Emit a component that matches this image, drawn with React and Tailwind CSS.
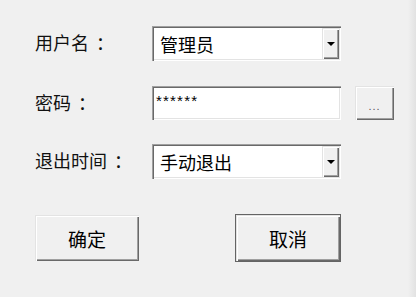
import React from "react";

const sunken =
  "bg-white shadow-[inset_1px_1px_0_#a0a0a0,inset_2px_2px_0_#696969,inset_-1px_-1px_0_#ffffff,inset_-2px_-2px_0_#e3e3e3]";
const raised =
  "bg-[#f0f0f0] shadow-[inset_1px_1px_0_#e3e3e3,inset_2px_2px_0_#ffffff,inset_-1px_-1px_0_#696969,inset_-2px_-2px_0_#a0a0a0]";

function Arrow() {
  return (
    <div className="w-0 h-0 border-l-[4px] border-r-[4px] border-t-[4px] border-l-transparent border-r-transparent border-t-black" />
  );
}

function Combo({ value }) {
  return (
    <div className={`w-[189px] h-[35px] flex p-[2px] ${sunken}`}>
      <div className="flex-1 flex items-center pl-[6px] text-[18px] leading-none text-black">
        {value}
      </div>
      <div className={`w-[17px] flex items-center justify-center ${raised}`}>
        <Arrow />
      </div>
    </div>
  );
}

function Label({ text }) {
  return (
    <div className="w-[117px] flex text-[18px] leading-none text-[#111] pb-[3px]">
      <span>{text}</span>
      <span className="ml-[7px]">：</span>
    </div>
  );
}

export default function App() {
  return (
    <div className="w-[416px] h-[297px] flex bg-[#f0f0f0] font-['Microsoft_YaHei','Noto_Sans_CJK_SC',sans-serif] overflow-hidden">
      <div className="flex-1 flex flex-col pl-[35px] pt-[26px]">
        <div className="flex items-center h-[35px]">
          <Label text="用户名" />
          <Combo value="管理员" />
        </div>
        <div className="flex items-center h-[34px] mt-[25px]">
          <Label text="密码" />
          <div
            className={`w-[189px] h-[34px] pl-[4px] pt-[7px] font-['Liberation_Sans',sans-serif] text-[15px] leading-[15px] tracking-[1.2px] text-black ${sunken}`}
          >
            ******
          </div>
          <div
            className={`ml-[14px] w-[39px] h-[34px] flex items-end justify-center pb-[8px] text-[11px] leading-none tracking-[1px] text-[#555] font-['Liberation_Sans',sans-serif] ${raised}`}
          >
            ...
          </div>
        </div>
        <div className="flex items-center h-[35px] mt-[24px]">
          <Label text="退出时间" />
          <Combo value="手动退出" />
        </div>
        <div className="flex items-center h-[48px] mt-[35px]">
          <div
            className={`w-[104px] h-[46px] flex items-center justify-center text-[19px] leading-none text-black ${raised}`}
          >
            确定
          </div>
          <div
            className={`ml-[96px] w-[106px] h-[48px] flex items-center justify-center text-[19px] leading-none text-black border border-[#646464] ${raised}`}
          >
            取消
          </div>
        </div>
      </div>
      <div className="w-[8px] h-full bg-gradient-to-r from-[#f0f0f0] to-[#e2e2e2]" />
    </div>
  );
}
